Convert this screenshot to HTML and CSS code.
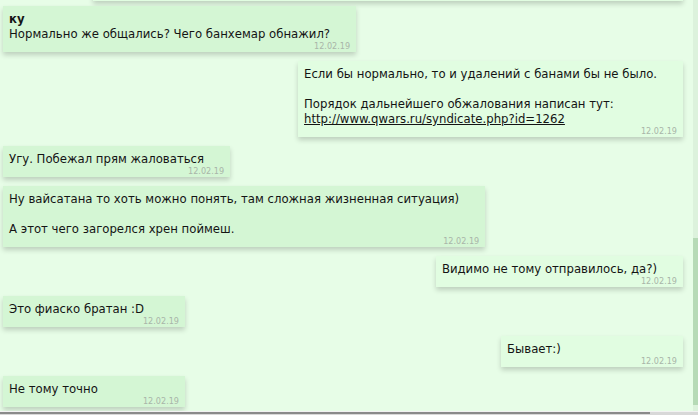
FILE: index.html
```html
<html>
<head>
	<meta charset="utf-8">
	<title>сообщения</title>
	<link rel="stylesheet" href="styles.css">
</head>

<body>

<div id='chat'>
	<div class='list'>
		<div class='row out first'><div class='msg cut'></div></div>

		<div class='row in'>
			<div class='msg'>
				<div class='txt'><b>ку</b><br>Нормально же общались? Чего банхемар обнажил?</div>
				<div class='date'>12.02.19</div>
			</div>
		</div>

		<div class='row out'>
			<div class='msg'>
				<div class='txt'>Если бы нормально, то и удалений с банами бы не было.<br><br>Порядок дальнейшего обжалования написан тут:<br><a href='#'>http://www.qwars.ru/syndicate.php?id=1262</a></div>
				<div class='date'>12.02.19</div>
			</div>
		</div>

		<div class='row in'>
			<div class='msg'>
				<div class='txt'>Угу. Побежал прям жаловаться</div>
				<div class='date'>12.02.19</div>
			</div>
		</div>

		<div class='row in'>
			<div class='msg'>
				<div class='txt'>Ну вайсатана то хоть можно понять, там сложная жизненная ситуация)<br><br>А этот чего загорелся хрен поймеш.</div>
				<div class='date'>12.02.19</div>
			</div>
		</div>

		<div class='row out'>
			<div class='msg'>
				<div class='txt'>Видимо не тому отправилось, да?)</div>
				<div class='date'>12.02.19</div>
			</div>
		</div>

		<div class='row in'>
			<div class='msg'>
				<div class='txt'>Это фиаско братан :D</div>
				<div class='date'>12.02.19</div>
			</div>
		</div>

		<div class='row out'>
			<div class='msg'>
				<div class='txt'>Бывает:)</div>
				<div class='date'>12.02.19</div>
			</div>
		</div>

		<div class='row in'>
			<div class='msg'>
				<div class='txt'>Не тому точно</div>
				<div class='date'>12.02.19</div>
			</div>
		</div>
	</div>

	<div class='vbar'><div class='thumb'></div></div>
</div>
<div class='hbar'><div class='thumb'></div></div>

</body>
</html>
```

FILE: styles.css
```css
body{
	margin:0;
	background-color:#e7fde7;
	font-family:"DejaVu Sans Condensed","DejaVu Sans",sans-serif;
	font-size:13px;
	color:#141414;
	overflow:hidden;
}
#chat{
	display:flex;
	height:411px;
	overflow:hidden;
}
.list{
	flex:1;
	padding:0 10px 0 3px;
}
.row{
	display:flex;
	margin-bottom:9px;
}
.row.out{
	justify-content:flex-end;
}
.row.first{
	margin-bottom:5px;
}
.msg{
	min-width:170px;
	padding:5px 6px 0 6px;
	box-shadow:0 3px 5px rgba(0,0,0,0.18);
}
.in .msg{
	background-color:#d4f6d4;
}
.out .msg{
	background-color:#e1fde1;
}
/* хвост предыдущего сообщения, уехавший вверх */
.msg.cut{
	width:590px;
	height:40px;
	padding:0;
	margin-top:-39px;
}
.txt{
	line-height:15px;
	padding-right:20px;
}
.txt a{
	color:#141414;
}
.date{
	text-align:right;
	font-size:9px;
	line-height:11px;
	color:#a9b5a9;
}
.vbar{
	width:5px;
	background-color:#dcf2dc;
	display:flex;
	flex-direction:column;
}
.vbar .thumb{
	margin-top:238px;
	height:167px;
	background-color:#b6dab6;
}
.hbar{
	height:4px;
	background-color:#d8d8d8;
	border-top:1px solid #f2f2f2;
}
.hbar .thumb{
	width:650px;
	height:2px;
	background-color:#8a8a8a;
}
```
